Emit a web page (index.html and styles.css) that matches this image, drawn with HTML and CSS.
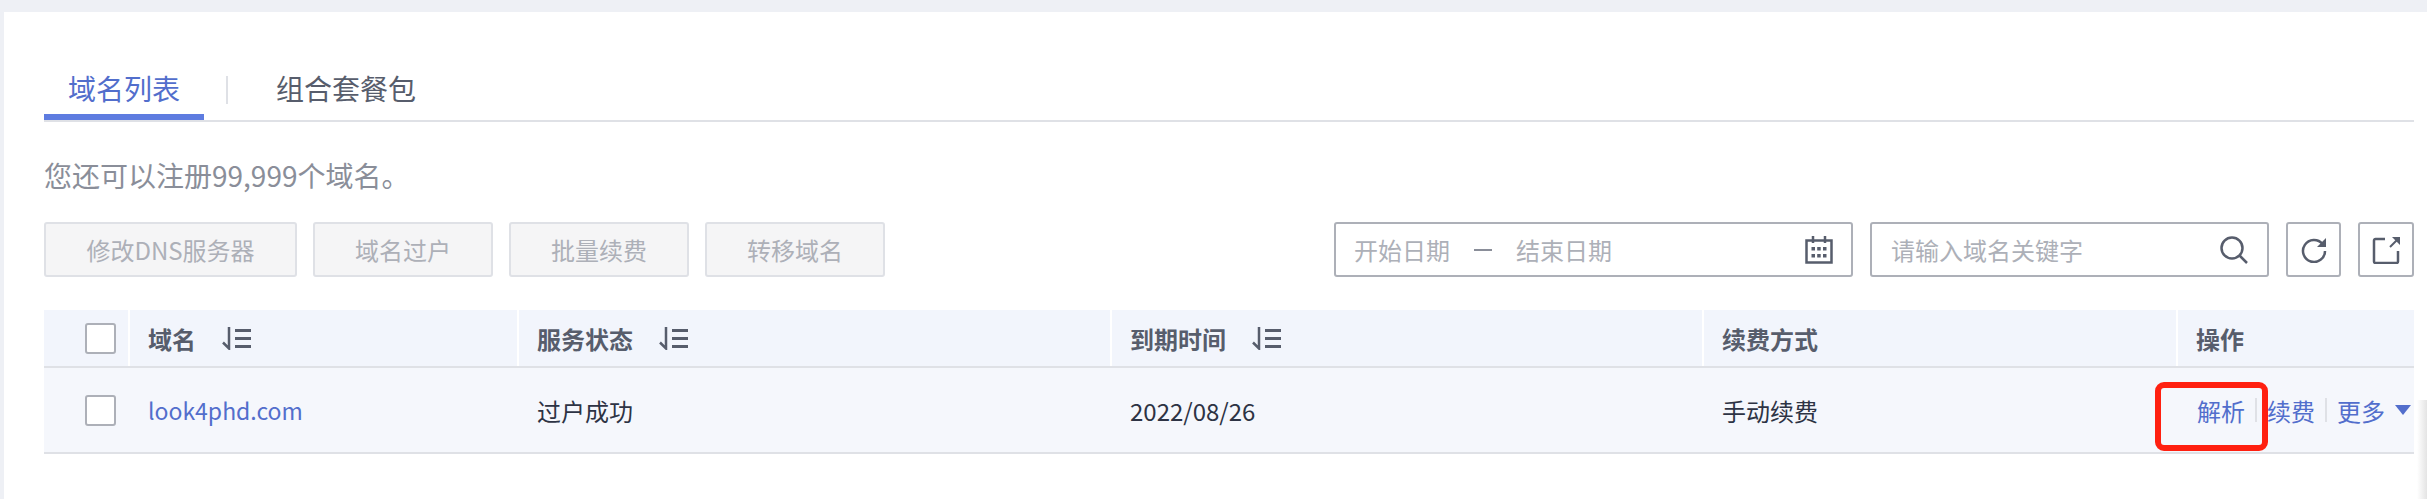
FILE: index.html
```html
<!DOCTYPE html>
<html>

<head>
    <meta charset="utf-8">
    <title>域名列表</title>
    <link rel="stylesheet" href="styles.css">
</head>

<body>
    <div class="panel">
        <div class="tabs">
            <div class="tab active">域名列表</div>
            <div class="tab-sep"></div>
            <div class="tab">组合套餐包</div>
        </div>
        <p class="quota">您还可以注册99,999个域名。</p>
        <div class="toolbar">
            <button class="btn wide">修改DNS服务器</button>
            <button class="btn">域名过户</button>
            <button class="btn">批量续费</button>
            <button class="btn">转移域名</button>
            <div class="date-box">
                <span>开始日期</span>
                <span class="dash"></span>
                <span>结束日期</span>
                <svg class="cal" width="28" height="28" viewBox="0 0 28 28">
                    <path d="M1.500 4.500h25v22h-25z" fill="none" stroke="#575d6c" stroke-width="2.500" />
                    <path d="M8 0v7M20 0v7" stroke="#575d6c" stroke-width="2.500" />
                    <path d="M6.500 11h3.500v3.500H6.500zM12.200 11h3.500v3.500h-3.500zM18 11h3.500v3.500H18zM6.500 18h3.500v3.500H6.500zM12.200 18h3.500v3.500h-3.500zM18 18h3.500v3.500H18z" fill="#575d6c" />
                </svg>
            </div>
            <div class="search-box">
                <span>请输入域名关键字</span>
                <svg width="28" height="28" viewBox="0 0 28 28" fill="none" stroke="#575d6c" stroke-width="2.500">
                    <circle cx="12" cy="12" r="10.500" />
                    <path d="M19.500 19.500l7.500 7.500" />
                </svg>
            </div>
            <div class="icon-btn">
                <svg width="26" height="26" viewBox="0 0 26 26" fill="none" stroke="#575d6c" stroke-width="2.500">
                    <path d="M21.500 7A11 11 0 1 0 24 14" />
                    <path d="M25 1v9h-9z" fill="#575d6c" stroke="none" />
                </svg>
            </div>
            <div class="icon-btn">
                <svg width="28" height="28" viewBox="0 0 28 28" fill="none" stroke="#575d6c" stroke-width="2.500">
                    <path d="M13 3H3.500a1.500 1.500 0 0 0-1.500 1.500v21a1.500 1.500 0 0 0 1.500 1.500h21a1.500 1.500 0 0 0 1.500-1.500V15" />
                    <path d="M18 11l7-7" stroke-width="2" />
                    <path d="M20 1h8v8z" fill="#575d6c" stroke="none" />
                </svg>
            </div>
        </div>

        <div class="row head">
            <div class="cell check"><span class="box"></span></div>
            <div class="cell">域名
                <svg class="sort" width="30" height="23" viewBox="0 0 30 23">
                    <path d="M7 0v21.500L1 15.500" fill="none" stroke="#575d6c" stroke-width="2.500" />
                    <path d="M13 2h16v3H13zM13 10h16v3H13zM13 18h16v3H13z" fill="#575d6c" />
                </svg>
            </div>
            <div class="cell">服务状态
                <svg class="sort" width="30" height="23" viewBox="0 0 30 23">
                    <path d="M7 0v21.500L1 15.500" fill="none" stroke="#575d6c" stroke-width="2.500" />
                    <path d="M13 2h16v3H13zM13 10h16v3H13zM13 18h16v3H13z" fill="#575d6c" />
                </svg>
            </div>
            <div class="cell">到期时间
                <svg class="sort" width="30" height="23" viewBox="0 0 30 23">
                    <path d="M7 0v21.500L1 15.500" fill="none" stroke="#575d6c" stroke-width="2.500" />
                    <path d="M13 2h16v3H13zM13 10h16v3H13zM13 18h16v3H13z" fill="#575d6c" />
                </svg>
            </div>
            <div class="cell">续费方式</div>
            <div class="cell">操作</div>
        </div>
        <div class="row body">
            <div class="cell check"><span class="box"></span></div>
            <div class="cell link domain">look4phd.com</div>
            <div class="cell">过户成功</div>
            <div class="cell">2022/08/26</div>
            <div class="cell">手动续费</div>
            <div class="cell ops">
                <span class="link">解析</span>
                <i class="op-sep"></i>
                <span class="link">续费</span>
                <i class="op-sep"></i>
                <span class="link">更多</span>
                <i class="caret"></i>
                <div class="mark"></div>
            </div>
        </div>
    </div>
    <div class="shade"></div>
</body>

</html>
```

FILE: styles.css
```css
html,
body {
    margin: 0;
    height: 499px;
    overflow: hidden;
}

body {
    position: relative;
    background-color: #eef0f5;
    padding: 12px 0 0 4px;
    box-sizing: border-box;
    font-family: "Noto Sans CJK SC", "Noto Sans", sans-serif;
    font-size: 24px;
    color: #2d3344;
}

.panel {
    background-color: white;
    height: 487px;
    padding: 60px 13px 0 40px;
    box-sizing: border-box;
}

.tabs {
    display: flex;
    align-items: flex-start;
    height: 48px;
    border-bottom: 2px solid #dfe1e6;
}

.tab {
    font-size: 28px;
    line-height: 32px;
    padding: 0 24px;
    height: 42px;
    color: #575d6c;
}

.tab.active {
    color: #526ecc;
    border-bottom: 6px solid #5e7ce0;
}

.tab-sep {
    width: 2px;
    height: 28px;
    margin: 4px 48px 0 22px;
    background-color: #dfe1e6;
}

.tab-sep + .tab {
    padding: 0;
}

.quota {
    margin: 32px 0 0;
    font-size: 28px;
    line-height: 42px;
    color: #8a8e99;
}

.toolbar {
    display: flex;
    margin-top: 26px;
    height: 55px;
}

.btn {
    width: 180px;
    height: 55px;
    margin: 0 16px 0 0;
    padding: 0;
    font-family: inherit;
    font-size: 24px;
    color: #adb0b8;
    background-color: #f5f5f6;
    border: 2px solid #dfe1e6;
    border-radius: 3px;
}

.wide {
    width: 253px;
}

.date-box,
.search-box,
.icon-btn {
    display: flex;
    align-items: center;
    height: 55px;
    box-sizing: border-box;
    border: 2px solid #adb0b8;
    border-radius: 3px;
    color: #adb0b8;
}

.date-box {
    width: 519px;
    margin-left: auto;
    padding: 0 18px 0 18px;
}

.dash {
    width: 18px;
    height: 2px;
    margin: 0 24px;
    background-color: #8a8e99;
}

.cal {
    margin-left: auto;
}

.search-box {
    width: 399px;
    margin-left: 17px;
    padding: 0 19px 0 19px;
    justify-content: space-between;
}

.icon-btn {
    width: 55px;
    margin-left: 17px;
    justify-content: center;
}

.icon-btn:last-child {
    width: 56px;
}

.row {
    display: grid;
    grid-template-columns: 84px 389px 593px 592px 474px 238px;
}

.head {
    margin-top: 33px;
    height: 56px;
    background-color: #f2f5fc;
    border-bottom: 2px solid #dfe1e6;
    font-weight: 700;
    color: #575d6c;
}

.body {
    height: 84px;
    background-color: #f5f7fc;
    border-bottom: 2px solid #dfe1e6;
}

.cell {
    display: flex;
    align-items: center;
    padding-left: 20px;
}

.head .cell {
    border-left: 2px solid white;
    padding-left: 18px;
}

.check,
.head .check {
    padding-left: 41px;
    border-left: none;
}

.box {
    width: 31px;
    height: 31px;
    box-sizing: border-box;
    background-color: white;
    border: 2px solid #adb0b8;
    border-radius: 3px;
}

.sort {
    margin-left: 26px;
}

.link {
    color: #526ecc;
}

.domain {
    font-size: 23px;
}

.ops {
    position: relative;
    padding-left: 21px;
}

.op-sep {
    width: 2px;
    height: 24px;
    margin: 0 10px;
    background-color: #dfe1e6;
}

.caret {
    margin-left: 10px;
    border-left: 8px solid transparent;
    border-right: 8px solid transparent;
    border-top: 10px solid #526ecc;
}

.mark {
    position: absolute;
    left: -21px;
    top: 14px;
    width: 113px;
    height: 69px;
    box-sizing: border-box;
    border: 6px solid #ff2010;
    border-radius: 9px;
}

.shade {
    position: absolute;
    right: 0;
    top: 400px;
    width: 10px;
    height: 99px;
    background: linear-gradient(to right, #ffffff, #e4e4e4);
}
```
